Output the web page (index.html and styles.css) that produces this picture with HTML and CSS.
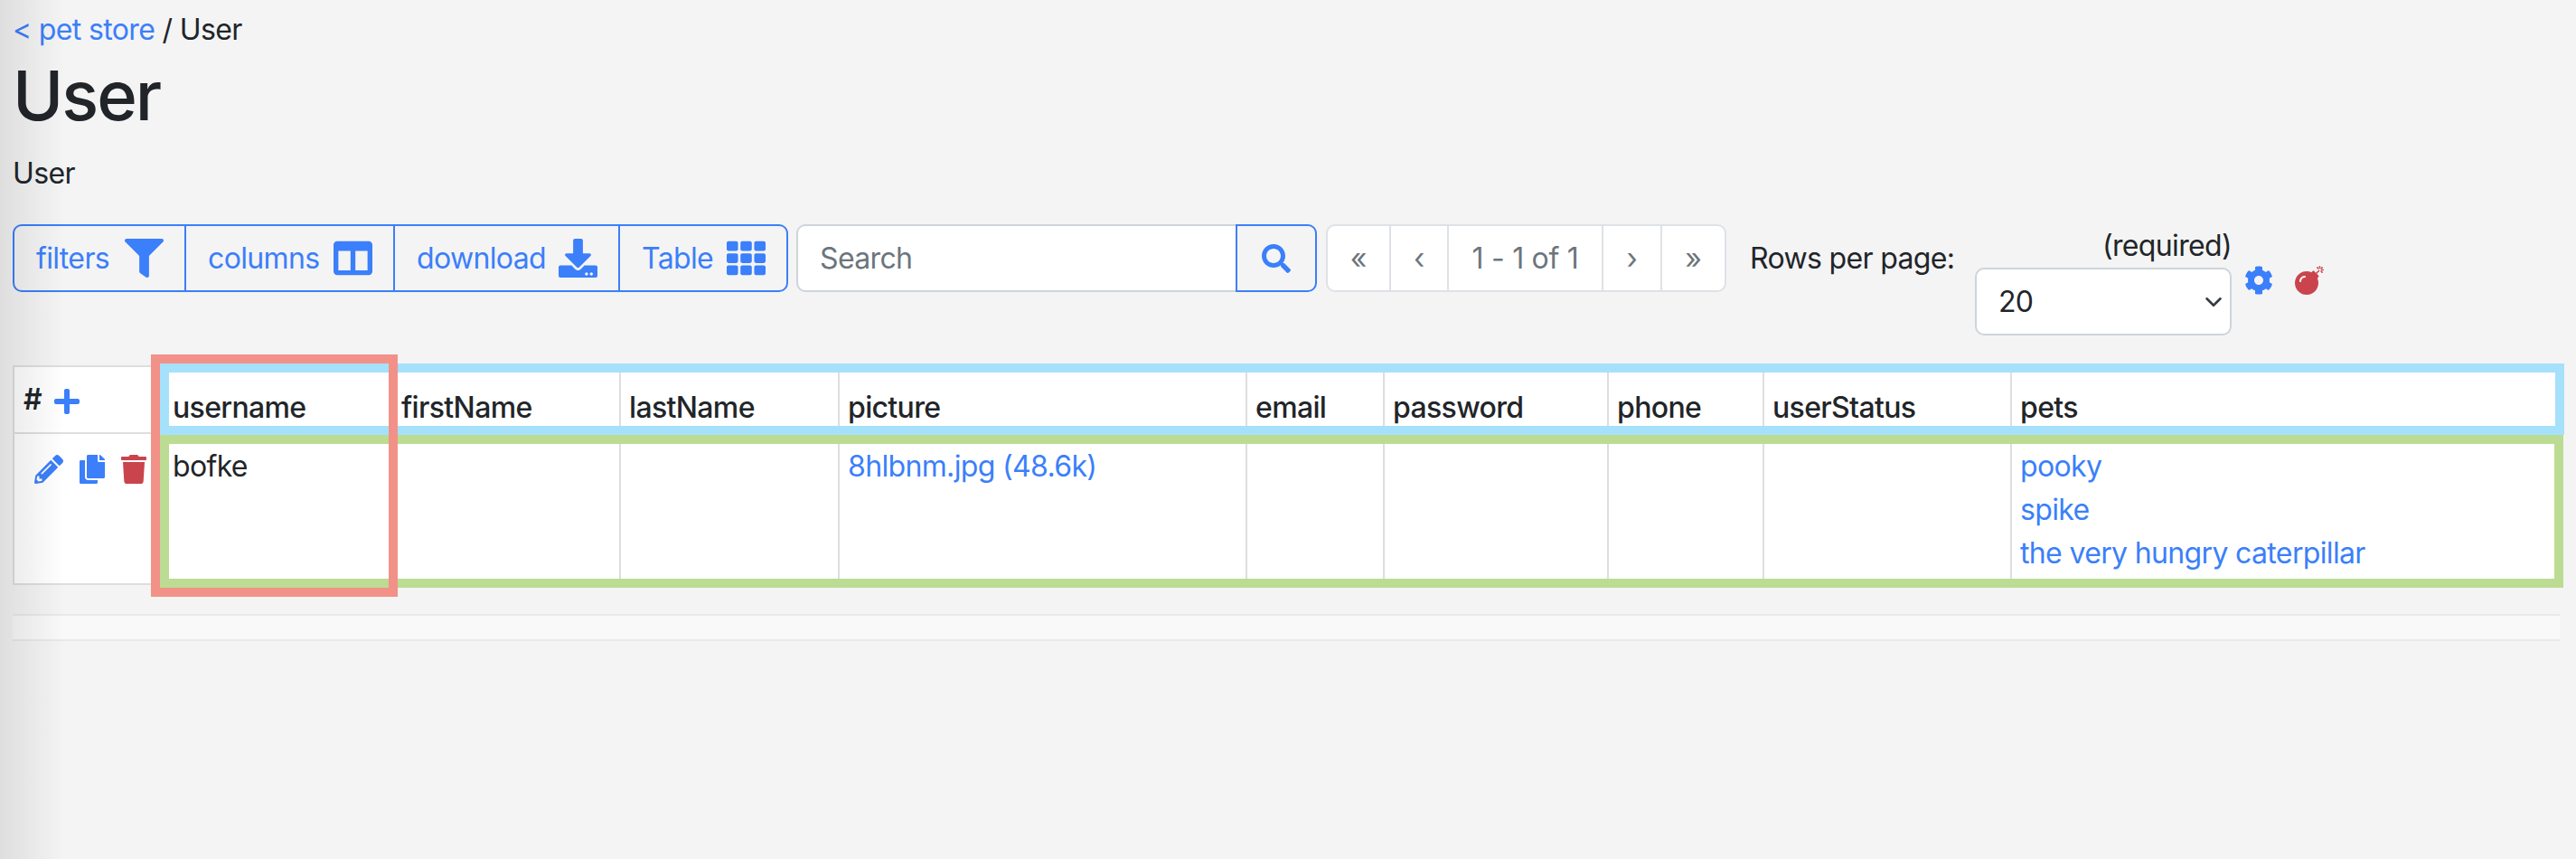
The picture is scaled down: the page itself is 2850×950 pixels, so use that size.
FILE: index.html
```html
<!DOCTYPE html>
<html lang="en">
<head>
    <meta charset="UTF-8">
    <title>User</title>
    <link rel="stylesheet" href="styles.css">
</head>
<body>
    <div class="edge-shade"></div>
    <div class="crumbs"><a href="#">&lt; pet store</a> / User</div>
    <h1>User</h1>
    <p class="intro">User</p>

    <div class="toolbar">
        <div class="btn-group">
            <a class="tool-btn btn-filters" href="#">filters
                <svg class="icon-lg" viewBox="0 0 512 512"><path d="M487.976 0H24.028C2.71 0-8.047 25.866 7.058 40.971L192 225.941V432c0 7.831 3.821 15.17 10.237 19.662l80 55.98C298.02 518.69 320 507.493 320 487.98V225.941l184.947-184.97C520.021 25.896 509.338 0 487.976 0z"/></svg>
            </a>
            <a class="tool-btn btn-columns" href="#">columns
                <svg class="icon-lg" viewBox="0 0 512 512"><path d="M464 32H48C21.49 32 0 53.49 0 80v352c0 26.51 21.49 48 48 48h416c26.51 0 48-21.49 48-48V80c0-26.51-21.49-48-48-48zM224 416H64V160h160v256zm224 0H288V160h160v256z"/></svg>
            </a>
            <a class="tool-btn btn-download" href="#">download
                <svg class="icon-lg" viewBox="0 0 512 512"><path d="M216 0h80c13.3 0 24 10.7 24 24v168h87.7c17.8 0 26.7 21.5 14.1 34.1L269.7 378.3c-7.5 7.5-19.8 7.5-27.3 0L90.1 226.1c-12.6-12.6-3.7-34.1 14.1-34.1H192V24c0-13.3 10.7-24 24-24zm296 376v112c0 13.3-10.7 24-24 24H24c-13.3 0-24-10.7-24-24V376c0-13.3 10.7-24 24-24h146.7l49 49c20.1 20.1 52.5 20.1 72.6 0l49-49H488c13.3 0 24 10.7 24 24zm-124 88c0-11-9-20-20-20s-20 9-20 20 9 20 20 20 20-9 20-20zm64 0c0-11-9-20-20-20s-20 9-20 20 9 20 20 20 20-9 20-20z"/></svg>
            </a>
            <a class="tool-btn btn-table" href="#">Table
                <svg class="icon-lg" viewBox="0 0 512 512"><path d="M149.333 56v80c0 13.255-10.745 24-24 24H24c-13.255 0-24-10.745-24-24V56c0-13.255 10.745-24 24-24h101.333c13.255 0 24 10.745 24 24zm181.334 240v-80c0-13.255-10.745-24-24-24H205.333c-13.255 0-24 10.745-24 24v80c0 13.255 10.745 24 24 24h101.333c13.256 0 24.001-10.745 24.001-24zm32-240v80c0 13.255 10.745 24 24 24H488c13.255 0 24-10.745 24-24V56c0-13.255-10.745-24-24-24H386.667c-13.255 0-24 10.745-24 24zm-32 80V56c0-13.255-10.745-24-24-24H205.333c-13.255 0-24 10.745-24 24v80c0 13.255 10.745 24 24 24h101.333c13.256 0 24.001-10.745 24.001-24zm-205.334 56H24c-13.255 0-24 10.745-24 24v80c0 13.255 10.745 24 24 24h101.333c13.255 0 24-10.745 24-24v-80c0-13.255-10.745-24-24-24zM0 376v80c0 13.255 10.745 24 24 24h101.333c13.255 0 24-10.745 24-24v-80c0-13.255-10.745-24-24-24H24c-13.255 0-24 10.745-24 24zm386.667-56H488c13.255 0 24-10.745 24-24v-80c0-13.255-10.745-24-24-24H386.667c-13.255 0-24 10.745-24 24v80c0 13.255 10.745 24 24 24zm0 160H488c13.255 0 24-10.745 24-24v-80c0-13.255-10.745-24-24-24H386.667c-13.255 0-24 10.745-24 24v80c0 13.255 10.745 24 24 24zM181.333 376v80c0 13.255 10.745 24 24 24h101.333c13.255 0 24-10.745 24-24v-80c0-13.255-10.745-24-24-24H205.333c-13.255 0-24 10.745-24 24z"/></svg>
            </a>
        </div>

        <form class="search">
            <input type="text" placeholder="Search">
            <button type="button">
                <svg class="icon" viewBox="0 0 512 512"><path d="M505 442.7L405.3 343c-4.5-4.5-10.6-7-17-7H372c27.6-35.3 44-79.7 44-128C416 93.1 322.9 0 208 0S0 93.1 0 208s93.1 208 208 208c48.3 0 92.7-16.4 128-44v16.3c0 6.4 2.5 12.5 7 17l99.7 99.7c9.4 9.4 24.6 9.4 33.9 0l28.3-28.3c9.4-9.4 9.4-24.6.1-34zM208 336c-70.7 0-128-57.2-128-128 0-70.7 57.2-128 128-128 70.7 0 128 57.2 128 128 0 70.7-57.2 128-128 128z"/></svg>
            </button>
        </form>

        <div class="pager">
            <span class="page-first">«</span>
            <span class="page-prev">‹</span>
            <span class="page-info">1 - 1 of 1</span>
            <span class="page-next">›</span>
            <span class="page-last">»</span>
        </div>

        <span class="rows-label">Rows per page:</span>
        <div class="rows-field">
            <label for="rows">(required)</label>
            <select id="rows"><option>20</option><option>50</option><option>100</option></select>
        </div>
        <svg class="icon tool-icon blue" viewBox="0 0 512 512"><path d="M487.4 315.7l-42.6-24.6c4.3-23.2 4.3-47 0-70.2l42.6-24.6c4.9-2.8 7.1-8.6 5.5-14-11.1-35.6-30-67.8-54.7-94.6-3.8-4.1-10-5.1-14.8-2.3L380.8 110c-17.9-15.4-38.5-27.3-60.8-35.1V25.8c0-5.6-3.9-10.5-9.4-11.7-36.7-8.2-74.3-7.8-109.2 0-5.5 1.2-9.4 6.1-9.4 11.7V75c-22.2 7.9-42.8 19.8-60.8 35.1L88.7 85.5c-4.9-2.8-11-1.9-14.8 2.3-24.7 26.7-43.6 58.9-54.7 94.6-1.7 5.4.6 11.2 5.5 14L67.3 221c-4.3 23.2-4.3 47 0 70.2l-42.6 24.6c-4.9 2.8-7.1 8.6-5.5 14 11.1 35.6 30 67.8 54.7 94.6 3.8 4.1 10 5.1 14.8 2.3l42.6-24.6c17.9 15.4 38.5 27.3 60.8 35.1v49.2c0 5.6 3.9 10.5 9.4 11.7 36.7 8.2 74.3 7.8 109.2 0 5.5-1.2 9.4-6.1 9.4-11.7v-49.2c22.2-7.9 42.8-19.8 60.8-35.1l42.6 24.6c4.9 2.8 11 1.9 14.8-2.3 24.7-26.7 43.6-58.9 54.7-94.6 1.5-5.5-.7-11.3-5.6-14.1zM256 336c-44.1 0-80-35.9-80-80s35.9-80 80-80 80 35.9 80 80-35.9 80-80 80z"/></svg>
        <svg class="icon tool-icon red" viewBox="0 0 512 512"><path d="M440.5 88.5l-52 52L415 167c9.4 9.4 9.4 24.6 0 33.9l-17.4 17.4c11.8 26.1 18.4 55.1 18.4 85.6 0 114.9-93.1 208-208 208S0 418.9 0 304 93.1 96 208 96c30.5 0 59.5 6.6 85.6 18.4L311 97c9.4-9.4 24.6-9.4 33.9 0l26.5 26.5 52-52 17.1 17zM500 60h-24c-6.6 0-12 5.4-12 12s5.4 12 12 12h24c6.6 0 12-5.4 12-12s-5.4-12-12-12zM440 0c-6.6 0-12 5.4-12 12v24c0 6.6 5.4 12 12 12s12-5.4 12-12V12c0-6.6-5.4-12-12-12zm33.9 55l17-17c4.7-4.7 4.7-12.3 0-17-4.7-4.7-12.3-4.7-17 0l-17 17c-4.7 4.7-4.7 12.3 0 17 4.8 4.7 12.4 4.7 17 0zm-67.8 0c4.7 4.7 12.3 4.7 17 0 4.7-4.7 4.7-12.3 0-17l-17-17c-4.7-4.7-12.3-4.7-17 0-4.7 4.7-4.7 12.3 0 17l17 17zm67.8 34c-4.7-4.7-12.3-4.7-17 0-4.7 4.7-4.7 12.3 0 17l17 17c4.7 4.7 12.3 4.7 17 0 4.7-4.7 4.7-12.3 0-17l-17-17zM112 272c0-35.3 28.7-64 64-64 8.8 0 16-7.2 16-16s-7.2-16-16-16c-52.9 0-96 43.1-96 96 0 8.8 7.2 16 16 16s16-7.2 16-16z"/></svg>
    </div>

    <div class="table-wrap">
        <table>
            <thead>
                <tr>
                    <th class="col-actions"><span class="hash">#</span>
                        <svg class="icon plus" viewBox="0 0 448 512"><path d="M416 208H272V64c0-17.67-14.33-32-32-32h-32c-17.67 0-32 14.33-32 32v144H32c-17.67 0-32 14.33-32 32v32c0 17.67 14.33 32 32 32h144v144c0 17.67 14.33 32 32 32h32c17.67 0 32-14.33 32-32V304h144c17.67 0 32-14.33 32-32v-32c0-17.67-14.33-32-32-32z"/></svg>
                    </th>
                    <th class="col-username">username</th>
                    <th class="col-first">firstName</th>
                    <th class="col-last">lastName</th>
                    <th class="col-picture">picture</th>
                    <th class="col-email">email</th>
                    <th class="col-password">password</th>
                    <th class="col-phone">phone</th>
                    <th class="col-status">userStatus</th>
                    <th class="col-pets">pets</th>
                </tr>
            </thead>
            <tbody>
                <tr>
                    <td class="row-actions">
                        <div class="action-icons">
                            <svg class="icon blue" viewBox="0 0 512 512"><path d="M497.9 142.1l-46.1 46.1c-4.7 4.7-12.3 4.7-17 0l-111-111c-4.7-4.7-4.7-12.3 0-17l46.1-46.1c18.7-18.7 49.1-18.7 67.9 0l60.1 60.1c18.8 18.7 18.8 49.1 0 67.9zM284.2 99.8L21.6 362.4.4 483.9c-2.9 16.4 11.4 30.6 27.8 27.8l121.5-21.3 262.6-262.6c4.7-4.7 4.7-12.3 0-17l-111-111c-4.8-4.7-12.4-4.7-17.1 0zM124.1 339.9c-5.5-5.5-5.5-14.3 0-19.8l154-154c5.5-5.5 14.3-5.5 19.8 0s5.5 14.3 0 19.8l-154 154c-5.5 5.5-14.3 5.5-19.8 0zM88 424h48v36.3l-64.5 11.3-31.1-31.1L51.7 376H88v48z"/></svg>
                            <svg class="icon blue" viewBox="0 0 448 512"><path d="M320 448v40c0 13.255-10.745 24-24 24H24c-13.255 0-24-10.745-24-24V120c0-13.255 10.745-24 24-24h72v296c0 30.879 25.121 56 56 56h168zm0-344V0H152c-13.255 0-24 10.745-24 24v368c0 13.255 10.745 24 24 24h272c13.255 0 24-10.745 24-24V128H344c-13.2 0-24-10.8-24-24zm120.971-31.029L375.029 7.029A24 24 0 0 0 358.059 0H352v96h96v-6.059a24 24 0 0 0-7.029-16.97z"/></svg>
                            <svg class="icon red" viewBox="0 0 448 512"><path d="M432 32H312l-9.4-18.7A24 24 0 0 0 281.1 0H166.8a23.72 23.72 0 0 0-21.4 13.3L136 32H16A16 16 0 0 0 0 48v32a16 16 0 0 0 16 16h416a16 16 0 0 0 16-16V48a16 16 0 0 0-16-16zM53.2 467a48 48 0 0 0 47.9 45h245.8a48 48 0 0 0 47.9-45L416 128H32z"/></svg>
                        </div>
                    </td>
                    <td>bofke</td>
                    <td></td>
                    <td></td>
                    <td><a href="#">8hlbnm.jpg (48.6k)</a></td>
                    <td></td>
                    <td></td>
                    <td></td>
                    <td></td>
                    <td>
                        <a class="ref" href="#">pooky</a>
                        <a class="ref" href="#">spike</a>
                        <a class="ref" href="#">the very hungry caterpillar</a>
                    </td>
                </tr>
            </tbody>
        </table>
        <!-- highlight boxes drawn over the table -->
        <div class="mark mark-green"></div>
        <div class="mark mark-blue"></div>
        <div class="mark mark-red"></div>
    </div>

    <div class="scroll-bar"></div>
</body>
</html>
```

FILE: styles.css
```css
* { box-sizing: border-box; }
body { font-family: Inter, "Liberation Sans", sans-serif; font-size: 32px; line-height: 48px; margin: 0; padding: 9px 14px 0; background-color: #f4f4f4; color: #212529; min-height: 100vh; letter-spacing: -0.65px; }
a { color: #3b7ffa; text-decoration: none; }
.edge-shade { position: absolute; left: 0; top: 0; bottom: 0; width: 72px; background: linear-gradient(to right, rgba(0,0,0,0.09), rgba(0,0,0,0)); pointer-events: none; z-index: 5; }

h1 { font-size: 76px; font-weight: 500; line-height: 96px; margin: 0 0 15px; letter-spacing: -2px; }
.intro { margin: 0 0 32px; }

.icon, .icon-lg { fill: currentColor; flex: none; display: block; }
.icon { height: 32px; width: auto; }
.icon-lg { height: 43px; width: 43px; }
.blue { color: #3b7ffa; }
.red { color: #c9444d; }

/* toolbar */
.toolbar { display: flex; align-items: flex-start; height: 124px; margin-bottom: 32px; }
.btn-group { display: flex; height: 75px; border: 2px solid #3b7ffa; border-radius: 10px; margin-right: 9px; }
.tool-btn { display: flex; align-items: center; justify-content: space-between; padding: 0 23px 0 24px; border-left: 2px solid #3b7ffa; }
.tool-btn:first-child { border-left: none; }
.btn-filters { width: 188px; }
.btn-columns { width: 231px; }
.btn-download { width: 249px; }
.btn-table { width: 186px; }

.search { display: flex; width: 576px; height: 75px; margin-right: 10px; }
.search input { flex: 1; min-width: 0; height: 100%; padding: 0 24px; font: inherit; letter-spacing: inherit; border: 2px solid #ced4da; border-right: none; border-radius: 10px 0 0 10px; background: white; outline: none; }
.search input::placeholder { color: #6c757d; opacity: 1; }
.search button { width: 90px; height: 100%; display: flex; align-items: center; justify-content: center; padding: 0; background: #f4f4f4; color: #3b7ffa; border: 2px solid #3b7ffa; border-radius: 0 10px 10px 0; }

.pager { display: flex; height: 75px; background: white; color: #6c757d; border: 2px solid #dee2e6; border-radius: 10px; margin-right: 26px; letter-spacing: -0.3px; }
.pager span { display: flex; align-items: center; justify-content: center; border-left: 2px solid #dee2e6; }
.pager span:first-child { border-left: none; }
.page-first { width: 68px; }
.page-prev { width: 64px; }
.page-info { width: 171px; }
.page-next { width: 65px; }
.page-last { width: 71px; }

.rows-label { width: 224px; height: 75px; display: flex; align-items: center; margin-right: 25px; white-space: nowrap; }
.rows-field { display: flex; flex-direction: column; align-items: flex-end; }
.rows-field label { display: block; }
.rows-field select { width: 284px; height: 75px; padding: 0 24px; font: inherit; letter-spacing: inherit; color: #212529; background: white url("data:image/svg+xml,%3Csvg xmlns='http://www.w3.org/2000/svg' viewBox='0 0 16 16'%3E%3Cpath fill='none' stroke='%23343a40' stroke-linecap='round' stroke-linejoin='round' stroke-width='2' d='M2 5l6 6 6-6'/%3E%3C/svg%3E") no-repeat right 8px center / 20px 20px; border: 2px solid #ced4da; border-radius: 10px; appearance: none; }
.tool-icon { margin-top: 46px; }
.tool-icon.blue { margin-left: 14px; }
.tool-icon.red { margin-left: 24px; }

/* table */
.table-wrap { position: relative; width: 2816px; }
table { width: 100%; table-layout: fixed; border-collapse: collapse; background: white; }
th, td { border: 2px solid #dedede; padding: 0 9px; vertical-align: top; text-align: left; }
th { height: 74px; font-weight: 500; vertical-align: bottom; padding-bottom: 3px; }
td { height: 167px; padding-top: 12px; }
.col-actions { width: 166px; vertical-align: middle; padding: 0 10px; white-space: nowrap; }
.col-username { width: 253px; }
.col-first { width: 252px; }
.col-last { width: 242px; }
.col-picture { width: 451px; }
.col-email { width: 152px; }
.col-password { width: 248px; }
.col-phone { width: 172px; }
.col-status { width: 274px; }
.col-pets { width: 606px; }

.hash { display: inline-block; vertical-align: top; margin-right: 6px; font-weight: 600; }
.plus { display: inline-block; vertical-align: top; margin-top: 10px; color: #3b7ffa; }
.row-actions { padding: 23px 0 0 22px; }
.action-icons { display: flex; gap: 18px; }
.ref { display: block; }

.mark { position: absolute; border-style: solid; border-width: 10px; pointer-events: none; }
.mark-blue { left: 163px; top: -2px; width: 2660px; height: 79px; border-color: #a6e1fc; }
.mark-green { left: 163px; top: 77px; width: 2659px; height: 169px; border-color: #bcdc93; }
.mark-red { left: 153px; top: -12px; width: 273px; height: 268px; border-color: #f29187; }

.scroll-bar { width: 2818px; height: 30px; margin-top: 32px; background: #f9f9f9; border-top: 2px solid #e9e9e9; border-bottom: 2px solid #e9e9e9; }
```
